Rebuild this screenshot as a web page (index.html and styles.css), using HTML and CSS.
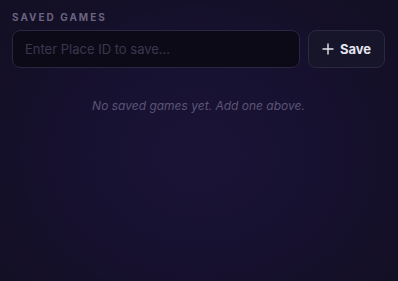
FILE: index.html
```html
<!DOCTYPE html>
<html lang="en">
<head>
    <meta charset="UTF-8">
    <meta name="viewport" content="width=device-width, initial-scale=1.0">
    <title>Saved Games</title>
    <link rel="stylesheet" href="styles.css">
</head>
<body>

    <div class="saved">
        <div class="section-label">Saved Games</div>

        <div class="add-row">
            <input class="place-input" type="text" placeholder="Enter Place ID to save...">
            <button class="save-button">
                <svg width="12" height="12" viewBox="0 0 12 12" fill="none">
                    <path d="M6 1v10M1 6h10" stroke="currentColor" stroke-width="1.4" stroke-linecap="round"/>
                </svg>
                <span>Save</span>
            </button>
        </div>

        <div class="empty">No saved games yet. Add one above.</div>
    </div>

</body>
</html>
```

FILE: styles.css
```css
html, body {
    height: 100%;
}

body {
    margin: 0;
    font-family: Inter, "Noto Sans", sans-serif;
    background: radial-gradient(ellipse 60% 70% at 50% 55%, #1a1336 0%, #171130 55%, #130f24 100%);
    color: #e6e4ef;
}

.saved {
    padding: 11px 13px 11px 12px;
}

.section-label {
    font-size: 10px;
    font-weight: 700;
    letter-spacing: 2px;
    text-transform: uppercase;
    color: #6a6380;
    line-height: 12px;
    margin-bottom: 7px;
}

.add-row {
    display: flex;
    gap: 8px;
}

.place-input {
    flex: 1;
    height: 38px;
    box-sizing: border-box;
    background: #0c0a16;
    border: 1px solid #2a2540;
    border-radius: 8px;
    padding: 0 12px;
    font-family: inherit;
    font-size: 13px;
    color: #e6e4ef;
    outline: none;
}

.place-input::placeholder {
    color: #3b3652;
}

.save-button {
    display: flex;
    align-items: center;
    gap: 6px;
    height: 38px;
    box-sizing: border-box;
    width: 77px;
    justify-content: center;
    background: #161529;
    border: 1px solid #2b2842;
    border-radius: 8px;
    color: #e6e4ef;
    font-family: inherit;
    font-size: 13px;
    font-weight: 700;
    cursor: pointer;
}

.empty {
    text-align: center;
    font-size: 12px;
    font-style: italic;
    color: #5b5575;
    margin-top: 30px;
}
```
